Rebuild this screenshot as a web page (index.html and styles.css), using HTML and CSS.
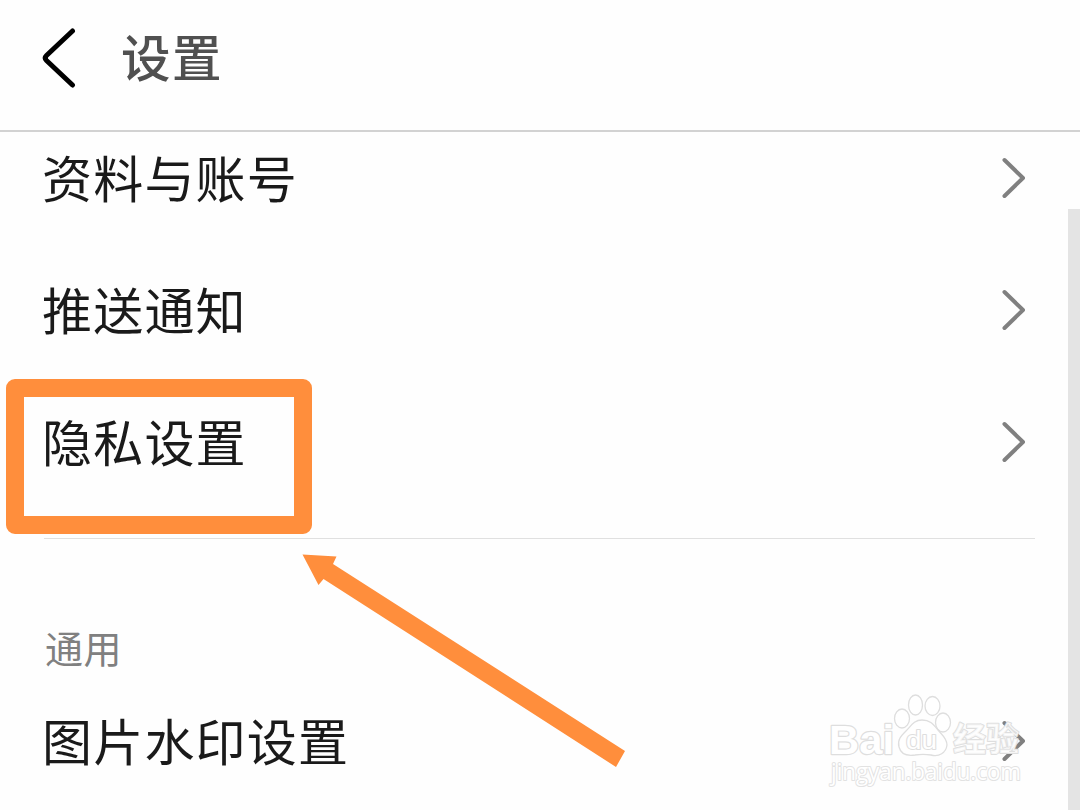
FILE: index.html
```
<!DOCTYPE html>
<html lang="zh-CN">

<head>
    <meta charset="UTF-8">
    <meta name="viewport" content="width=device-width, initial-scale=1.0">
    <title>设置</title>
    <link rel="stylesheet" href="styles.css">
</head>

<body>
    <header class="header">
        <svg class="back" width="36" height="64" viewBox="0 0 36 64">
            <path d="M32.500 5 L6.500 29.500 Q4 32 6.500 34.500 L32.500 59" />
        </svg>
        <h1 class="title">设置</h1>
    </header>
    <main class="content">
        <div class="list">
            <div class="row">
                <span class="label">资料与账号</span>
                <svg class="arrow" width="28" height="46" viewBox="0 0 28 46"><path d="M4.500 5 L23 23 L4.500 41" /></svg>
            </div>
            <div class="row">
                <span class="label">推送通知</span>
                <svg class="arrow" width="28" height="46" viewBox="0 0 28 46"><path d="M4.500 5 L23 23 L4.500 41" /></svg>
            </div>
            <div class="row">
                <span class="label">隐私设置</span>
                <svg class="arrow" width="28" height="46" viewBox="0 0 28 46"><path d="M4.500 5 L23 23 L4.500 41" /></svg>
            </div>
            <hr class="divider">
            <h2 class="group">通用</h2>
            <div class="row">
                <span class="label">图片水印设置</span>
                <svg class="arrow" width="28" height="46" viewBox="0 0 28 46"><path d="M4.500 5 L23 23 L4.500 41" /></svg>
            </div>
        </div>
        <div class="scrollbar"></div>
    </main>

    <div class="highlight"></div>
    <svg class="pointer" width="330" height="220" viewBox="300 550 330 220">
        <path d="M302.5 554.5 L336.5 556.5 L333 564 L625 751 L616 767 L323.500 579 L318.500 585 Z" />
    </svg>

    <svg class="watermark" width="210" height="110" viewBox="820 685 210 110">
        <g class="paw">
            <ellipse cx="902" cy="718.500" rx="7.500" ry="9.500" />
            <ellipse cx="915.500" cy="705" rx="7" ry="10" />
            <ellipse cx="932.500" cy="706" rx="7.500" ry="9.500" />
            <ellipse cx="943" cy="722.500" rx="7.500" ry="9.500" />
            <path d="M922 720 C914 720 911 726 906 731 C901 736 897 740 899 747 C901 755 908 756 915 755 C921 754 925 754 931 755 C939 757 946 753 947 745 C947 738 942 735 938 730 C933 724 930 720 922 720 Z" />
        </g>
        <text class="wm-brand" x="829" y="754" textLength="65" lengthAdjust="spacingAndGlyphs">Bai</text>
        <text class="wm-du" x="906" y="749" textLength="31" lengthAdjust="spacingAndGlyphs">du</text>
        <text class="wm-cn" x="953" y="751" textLength="66" lengthAdjust="spacingAndGlyphs">经验</text>
        <text class="wm-url" x="831" y="780" textLength="190" lengthAdjust="spacingAndGlyphs">jingyan.baidu.com</text>
    </svg>
</body>

</html>
```

FILE: styles.css
```
* {
    box-sizing: border-box;
}

body {
    margin: 0;
    height: 810px;
    display: flex;
    flex-direction: column;
    overflow: hidden;
    background-color: #fefefe;
    color: #1a1a1a;
    font-family: "Noto Sans CJK SC", sans-serif;
}

.header {
    flex: none;
    display: flex;
    align-items: center;
    gap: 45px;
    height: 132px;
    padding: 0 0 14px 40px;
    border-bottom: 2px solid #d2d2d2;
}

.back {
    fill: none;
    stroke: #000000;
    stroke-width: 5;
    stroke-linecap: round;
}

.title {
    margin: 0;
    padding-bottom: 4px;
    font-size: 49.5px;
    font-weight: 500;
    line-height: 60px;
    letter-spacing: 1.5px;
    color: #505050;
}

.content {
    flex: 1;
    min-height: 0;
    display: flex;
    overflow: hidden;
}

/* the list is scrolled a little under the header */
.list {
    flex: 1;
    margin-top: -19px;
    padding-left: 42px;
}

.row {
    display: flex;
    align-items: center;
    justify-content: space-between;
    height: 132px;
    padding: 0 40px 2px 0;
    font-size: 50px;
    line-height: 60px;
    letter-spacing: 1.2px;
}

.label {
    padding-bottom: 5px;
}

.arrow {
    fill: none;
    stroke: #808080;
    stroke-width: 4;
    stroke-linecap: round;
    stroke-linejoin: round;
}

.divider {
    height: 1px;
    margin: 29px 33px 0 2px;
    border: 0;
    background-color: #e0e0e0;
}

.group {
    height: 137px;
    margin: 0;
    padding: 83px 0 0 3px;
    font-size: 38px;
    font-weight: 400;
    line-height: 50px;
    letter-spacing: 0.5px;
    color: #808080;
}

.scrollbar {
    width: 12px;
    margin-top: 77px;
    background-color: #e4e4e4;
}

.highlight {
    position: absolute;
    left: 6px;
    top: 379px;
    width: 306px;
    height: 155px;
    border: 18px solid #ff8e3c;
    border-radius: 9px;
}

.pointer {
    position: absolute;
    left: 300px;
    top: 550px;
    fill: #ff8e3c;
}

.watermark {
    position: absolute;
    left: 820px;
    top: 685px;
    fill: #ffffff;
    stroke: #dedede;
    stroke-width: 1.3;
    stroke-linejoin: round;
    font-family: "Open Sans", sans-serif;
}

.wm-brand {
    font-family: "Liberation Sans", sans-serif;
    font-size: 41px;
    font-weight: 700;
    stroke-width: 2.4;
    paint-order: stroke;
}

.wm-du {
    font-family: "Liberation Sans", sans-serif;
    font-size: 25px;
    stroke-width: 2;
    paint-order: stroke;
}

.wm-cn {
    font-family: "Noto Sans CJK SC", sans-serif;
    font-size: 33px;
    font-weight: 700;
    fill-opacity: 0.75;
    stroke-width: 2;
    paint-order: stroke;
}

.wm-url {
    font-size: 23px;
    stroke: #e2e2e2;
    stroke-width: 2;
    paint-order: stroke;
}
```
